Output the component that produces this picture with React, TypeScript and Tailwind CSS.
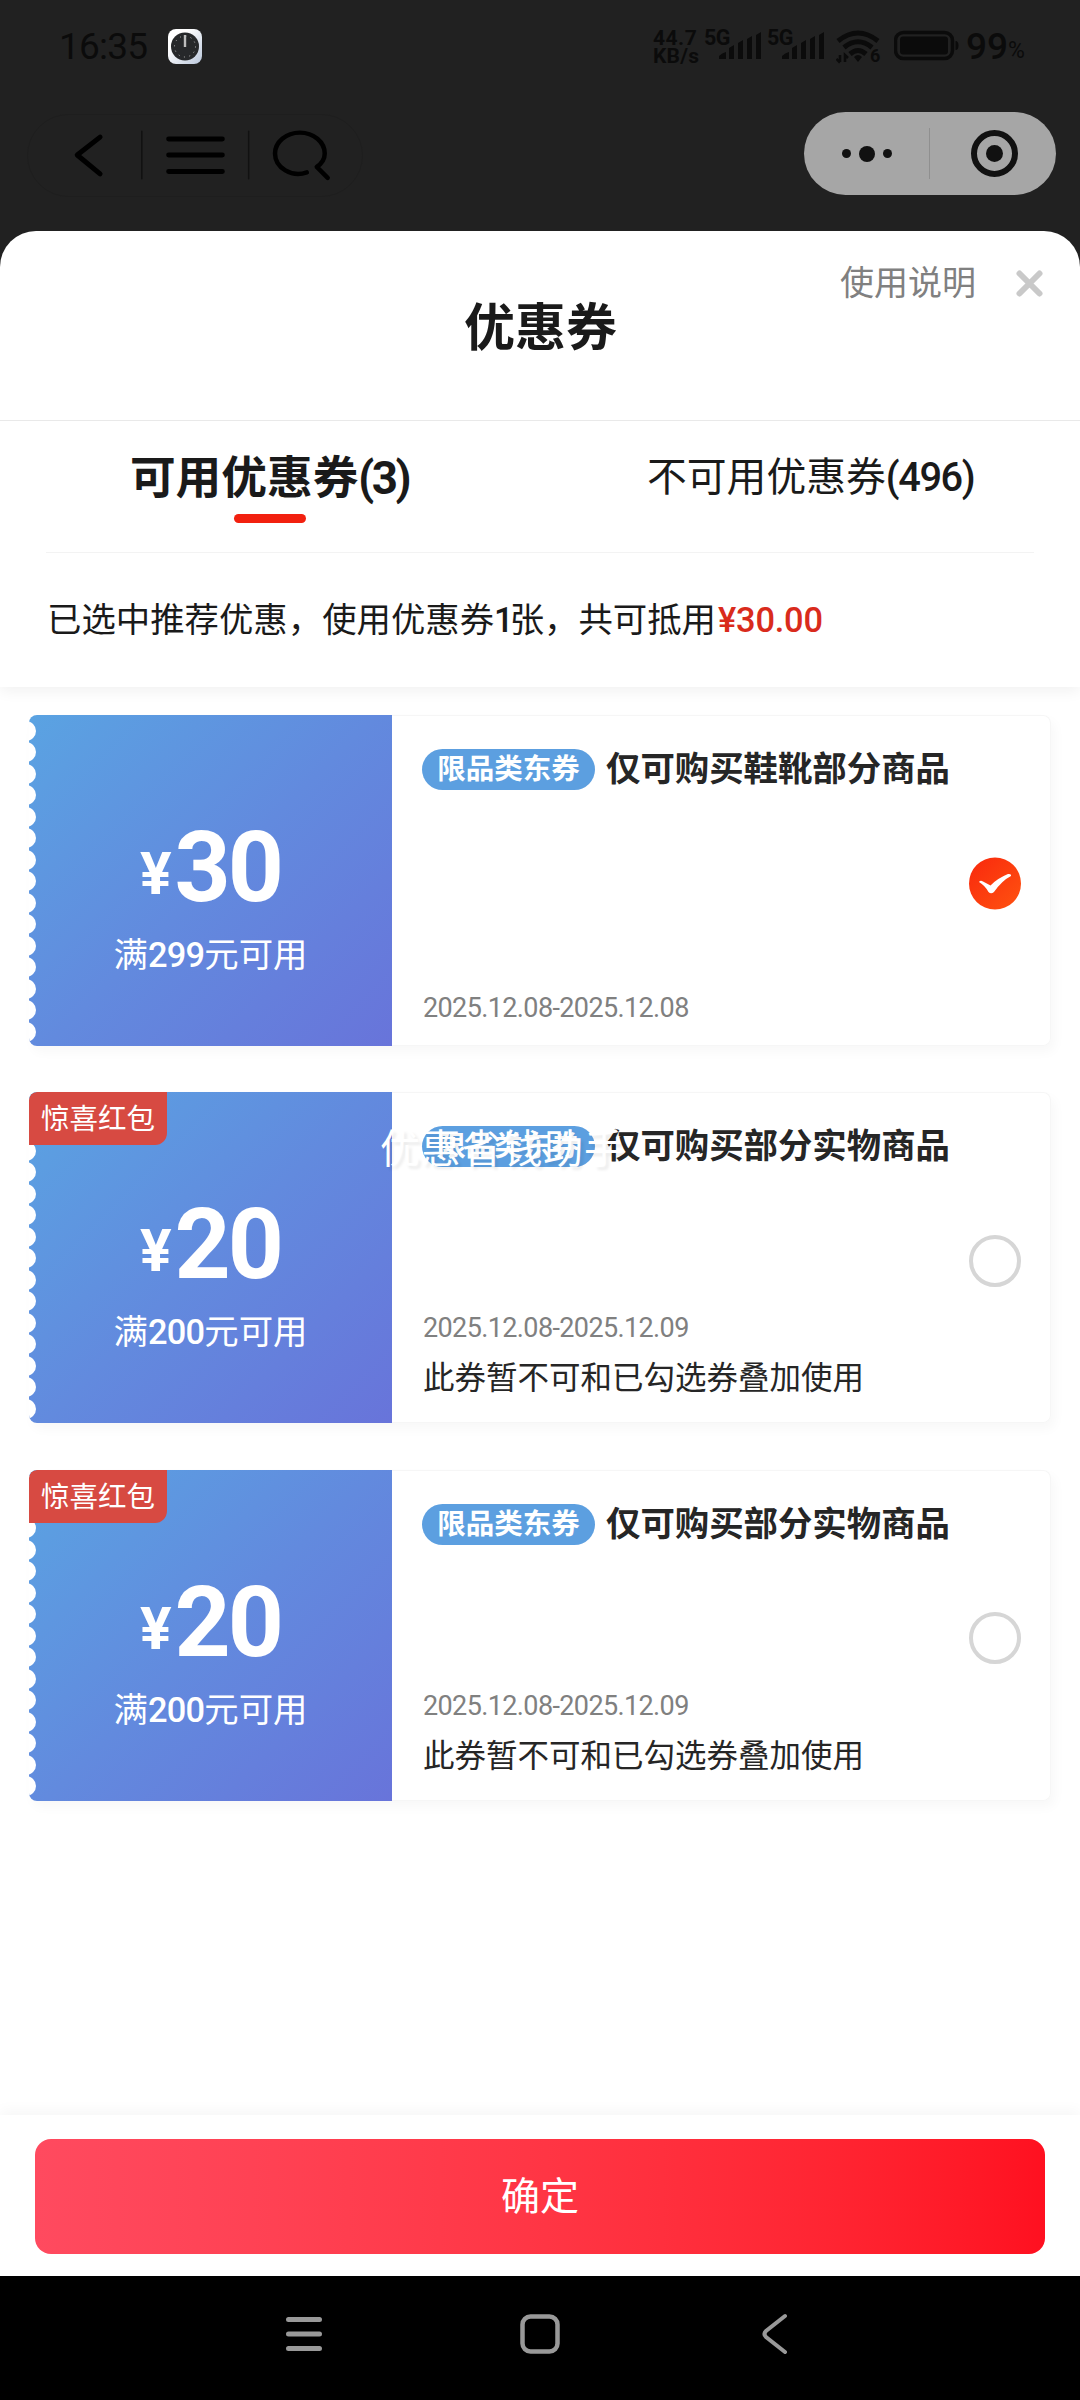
import React, { useState } from 'react';

type Coupon = {
  id: number;
  amount: number;
  limit: number;
  title: string;
  date: string;
  tag?: string;
  note?: string;
};

const coupons: Coupon[] = [
  { id: 1, amount: 30, limit: 299, title: '仅可购买鞋靴部分商品', date: '2025.12.08-2025.12.08' },
  { id: 2, amount: 20, limit: 200, title: '仅可购买部分实物商品', date: '2025.12.08-2025.12.09', tag: '惊喜红包', note: '此券暂不可和已勾选券叠加使用' },
  { id: 3, amount: 20, limit: 200, title: '仅可购买部分实物商品', date: '2025.12.08-2025.12.09', tag: '惊喜红包', note: '此券暂不可和已勾选券叠加使用' },
];

function Signal() {
  return (
    <svg width="43" height="28" viewBox="0 0 43 28" fill="#0b0b0b">
      <path d="M0 27v-3q3-3 7-4v7zM10 27V16l5-3v14zM19 27V11l5-3v19zM28 27V7l5-3v23zM37 27V3l5-3v27z" />
    </svg>
  );
}

function StatusBar() {
  return (
    <div className="flex h-[96px] items-start pt-[29px] text-[#0b0b0b]">
      <span className="ml-[59px] w-[109px] text-[37px] leading-[35px] tracking-[-0.8px] whitespace-nowrap">16:35</span>
      <svg width="34" height="35" viewBox="0 0 34 35">
        <defs>
          <linearGradient id="clock" x1="0" y1="0" x2="1" y2="1">
            <stop offset="0.3" stopColor="#fff" />
            <stop offset="1" stopColor="#b9c6da" />
          </linearGradient>
        </defs>
        <rect width="34" height="35" rx="8" fill="url(#clock)" />
        <circle cx="17" cy="17.5" r="14" fill="#26282a" />
        <circle cx="17" cy="17.5" r="10.5" fill="none" stroke="#bbb" strokeWidth="1" strokeDasharray="1 4.5" />
        <path d="M17 6v12" stroke="#bdbdbd" strokeWidth="2.4" />
      </svg>
      <div className="ml-[451px] w-[51px] text-[21px] leading-[18px] font-bold whitespace-nowrap">
        <div className="tracking-[0.5px]">44.7</div>
        <div className="tracking-[0.2px]">KB/s</div>
      </div>
      <span className="w-[15px] text-[21.5px] leading-[18px] font-bold tracking-[-0.5px]">5G</span>
      <div className="pt-[3px]"><Signal /></div>
      <span className="ml-[5px] w-[15px] text-[21.5px] leading-[18px] font-bold tracking-[-0.5px]">5G</span>
      <div className="pt-[3px]"><Signal /></div>
      <div className="relative ml-[11px]">
        <svg width="45" height="35" viewBox="0 0 45 35" fill="none" stroke="#0b0b0b" strokeWidth="5">
          <path d="M2 12Q22 -4 42 12" />
          <path d="M8 18.500Q22 7 36 18.500" />
          <path d="M14 25Q22 18 30 25" />
          <path d="M18 28q4-4 8 0l-4 5z" fill="#0b0b0b" stroke="none" />
          <path d="M4 26v7M0.500 30l3.500 3.500M9 33v-7l3 3" strokeWidth="2.500" />
        </svg>
        <span className="absolute top-[17px] left-[34px] text-[18px] leading-[20px] font-bold">6</span>
      </div>
      <svg className="ml-[13px]" width="66" height="35" viewBox="0 0 66 35">
        <rect x="1.500" y="3.500" width="57" height="26" rx="8" fill="none" stroke="#0b0b0b" strokeWidth="3.500" />
        <rect x="6" y="7.500" width="48" height="18" rx="3" fill="#0b0b0b" />
        <path d="M61.500 12q3 0 3 4.500t-3 4.500z" fill="#0b0b0b" />
      </svg>
      <span className="ml-[6px] text-[37px] leading-[35px] font-medium">99</span>
      <span className="pt-[13px] text-[23px] leading-[18px]">%</span>
    </div>
  );
}

function TopNav() {
  return (
    <div className="flex justify-between pt-[16px] pr-[24px] pl-[27px]">
      <div className="mt-[2px] flex h-[83px] w-[336px] items-center rounded-full border border-[#1e1e1e]">
        <svg width="336" height="83" viewBox="27.500 114 336 83" fill="none" stroke="#000" strokeWidth="5" strokeLinecap="round" strokeLinejoin="round">
          <path d="M100 137L77 155l23 19" />
          <path d="M169 139h54M169 155h54M169 171.500h54" />
          <path d="M308 172.500C293 178 276 168 276 153.500a25 21 0 0 1 50 0q0 8-8 13.500l11 11" strokeWidth="4.500" />
          <path d="M142 131v48M249.500 131v48" stroke="#111" strokeWidth="1.500" />
        </svg>
      </div>
      <div className="flex h-[83px] w-[252px] items-center rounded-full bg-[#a6a6a6]">
        <div className="flex w-[125px] items-center justify-center gap-[8px]">
          <i className="size-[9px] rounded-full bg-[#111]" />
          <i className="size-[16px] rounded-full bg-[#111]" />
          <i className="size-[9px] rounded-full bg-[#111]" />
        </div>
        <div className="h-[51px] w-px bg-[#8f8f8f]" />
        <div className="ml-[41px] flex size-[47px] items-center justify-center rounded-full border-[6px] border-[#111]">
          <i className="size-[17px] rounded-full bg-[#111]" />
        </div>
      </div>
    </div>
  );
}

function CouponCard({ coupon, checked, onSelect }: { coupon: Coupon; checked: boolean; onSelect: () => void }) {
  return (
    <div className="relative flex h-[331px] rounded-[8px] bg-white shadow-[4px_6px_12px_rgba(0,0,0,0.03)]">
      <div className="relative flex w-[363px] flex-col items-center overflow-hidden rounded-l-[8px] bg-[linear-gradient(135deg,#5aa3e2_0%,#628ade_50%,#6874da_100%)] text-white">
        {/* ticket notches */}
        <div className="absolute top-[5.5px] -left-[13px] flex flex-col gap-[1.5px]">
          {Array.from({ length: 15 }).map((_, i) => (
            <i key={i} className="size-[20px] rounded-full bg-white" />
          ))}
        </div>
        <div className="mt-[97px] flex h-[112px] items-baseline leading-[112px] font-bold">
          <span className="relative -top-[7px] mr-[3px] text-[59px]">¥</span>
          <span className="text-[98px] tracking-[-3px]">{coupon.amount}</span>
        </div>
        <div className="mt-[12px] h-[40px] text-[34.4px] leading-[39px]">
          满<span className="font-medium tracking-[-0.8px]">{coupon.limit}</span>元可用
        </div>
        {coupon.tag && (
          <span className="absolute top-0 left-0 h-[53px] w-[138px] rounded-tl-[8px] rounded-br-[12px] bg-[#d74a42] text-center text-[28.5px] leading-[55px]">
            {coupon.tag}
          </span>
        )}
      </div>
      <div className="flex flex-1 rounded-r-[8px] border border-l-0 border-[#f6f6f6] pr-[29px] pl-[30px]">
        <div className="flex flex-1 flex-col pt-[32px] pb-[21px]">
          <div className="flex items-center whitespace-nowrap">
            <span className="mr-[11px] h-[41px] w-[173px] rounded-full bg-[#5c9fe0] text-center text-[28.5px] leading-[42px] font-bold text-white">限品类东券</span>
            <span className="text-[34.4px] leading-[43px] font-bold text-[#262626]">{coupon.title}</span>
          </div>
          <div className="mt-auto pl-px text-[27px] leading-[32px] tracking-[-0.62px] text-[#808080]">{coupon.date}</div>
          {coupon.note && (
            <div className="mt-[15px] mb-[2px] pl-px text-[31.5px] leading-[40px] whitespace-nowrap text-[#262626]">{coupon.note}</div>
          )}
        </div>
        <button onClick={onSelect} aria-label={coupon.title} className="mt-[6px] self-center">
          {checked ? (
            <svg width="52" height="53" viewBox="0 0 52 52">
              <defs>
                <linearGradient id="check" x1="0" y1="0" x2="1" y2="1">
                  <stop stopColor="#f9280d" />
                  <stop offset="1" stopColor="#ff5310" />
                </linearGradient>
              </defs>
              <circle cx="26" cy="26" r="26" fill="url(#check)" />
              <path d="M10 24.500q1.500-2 4-0.500l7.500 4Q28 21 39 16.500q3.500-0.500 3 2Q33 23 25 34.500q-3 2.500-5.500 0Q16 28 10 24.500z" fill="#fff" />
            </svg>
          ) : (
            <div className="size-[52px] rounded-full border-4 border-[#d6d6d6]" />
          )}
        </button>
      </div>
    </div>
  );
}

export default function App() {
  const [selected, setSelected] = useState(1);

  return (
    <div className="flex h-[2400px] w-[1080px] flex-col overflow-hidden bg-[#212121] font-[Roboto,'Noto_Sans_CJK_SC',sans-serif]">
      <div className="h-[231px] shrink-0">
        <StatusBar />
        <TopNav />
      </div>

      <main className="relative flex h-[2045px] shrink-0 flex-col overflow-hidden rounded-t-[36px] bg-white text-[#1a1a1a]">
        <header className="relative h-[190px] shrink-0 border-b border-[#e9e9e9]">
          <h1 className="pt-[68px] pl-px text-center text-[51px] leading-[60px] font-bold">优惠券</h1>
          <div className="absolute top-[32px] right-[37px] flex items-center">
            <span className="text-[34px] leading-[41px] text-[#808080]">使用说明</span>
            <svg className="ml-[40px]" width="27" height="27" viewBox="0 0 27 27" stroke="#c9c9c9" strokeWidth="6" strokeLinecap="round">
              <path d="M3.500 3.500l20 20M23.500 3.500l-20 20" />
            </svg>
          </div>
        </header>

        <div className="mx-[46px] flex h-[132px] shrink-0 border-b border-[#f3f3f3]">
          <div className="flex w-[447px] flex-col items-center pt-[28px]">
            <span className="text-[45.7px] leading-[60px] font-bold whitespace-nowrap">可用优惠券<span className="tracking-[-2.5px]">(3)</span></span>
            <i className="mt-[5px] h-[9px] w-[72px] rounded-full bg-[#f2200f]" />
          </div>
          <div className="flex-1 pt-[27px] pl-[154px] text-[39.8px] leading-[60px] whitespace-nowrap">
            不可用优惠券<span className="font-medium tracking-[-1.4px]">(496)</span>
          </div>
        </div>

        <div className="h-[134px] shrink-0 bg-white pl-[47px] text-[34.4px] leading-[135px] whitespace-nowrap shadow-[0_4px_14px_rgba(0,0,0,0.06)] [clip-path:inset(0_0_-30px_0)]">
          已选中推荐优惠，使用优惠券<span className="font-medium tracking-[-4px]">1</span>张，共可抵用
          <span className="ml-[2px] font-medium tracking-[-0.2px] text-[#d92b1c]">¥30.00</span>
        </div>

        <div className="flex flex-1 flex-col gap-[46.4px] px-[29px] pt-[28px]">
          {coupons.map((c) => (
            <CouponCard key={c.id} coupon={c} checked={selected === c.id} onSelect={() => setSelected(c.id)} />
          ))}
        </div>

        <footer className="h-[161px] shrink-0 bg-white px-[35px] pt-[24px] shadow-[0_-4px_14px_rgba(0,0,0,0.04)]">
          <button className="h-[115px] w-full rounded-[16px] bg-linear-to-r from-[#ff4a5f] to-[#ff1020] text-[39px] leading-[117px] text-white">
            确定
          </button>
        </footer>

        {/* floating toast text */}
        <span className="absolute top-[889px] left-[380px] text-[40px] leading-[60px] tracking-[0.8px] whitespace-nowrap text-white [text-shadow:3px_3px_3px_rgba(0,0,0,0.08)]">优惠省钱助手</span>
      </main>

      <nav className="flex flex-1 items-start bg-black pt-[37px]">
        <svg className="ml-[285px]" width="38" height="42" viewBox="0 0 38 42" stroke="#999" strokeWidth="5" strokeLinecap="round">
          <path d="M3.500 6.500h31M3.500 21h31M3.500 35.500h31" />
        </svg>
        <svg className="ml-[196px]" width="42" height="42" viewBox="0 0 42 42" fill="none" stroke="#999" strokeWidth="4.500">
          <rect x="3.500" y="3.500" width="35" height="35" rx="8" />
        </svg>
        <svg className="ml-[200px]" width="30" height="42" viewBox="0 0 30 42" fill="none" stroke="#999" strokeWidth="4" strokeLinecap="round">
          <path d="M24 3L5 18q-3 3 0 6l19 15" />
        </svg>
      </nav>
    </div>
  );
}
